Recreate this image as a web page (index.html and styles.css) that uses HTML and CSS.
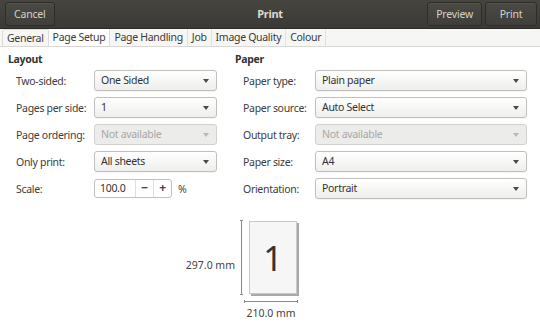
FILE: index.html
```html
<!DOCTYPE html>
<html lang="en">
  <head>
    <meta charset="UTF-8" />
    <meta name="viewport" content="width=device-width, initial-scale=1.0" />
    <title>Print</title>
    <link rel="stylesheet" href="styles.css">
  </head>
  <body>
    <div class="dialog">
      <!-- Header bar -->
      <header class="headerbar">
        <button class="hb-btn">Cancel</button>
        <div class="hb-title">Print</div>
        <div class="hb-actions">
          <button class="hb-btn">Preview</button>
          <button class="hb-btn">Print</button>
        </div>
      </header>

      <!-- Tabs -->
      <nav class="tabs">
        <span class="tab">General</span>
        <span class="tab active">Page Setup</span>
        <span class="tab">Page Handling</span>
        <span class="tab">Job</span>
        <span class="tab">Image Quality</span>
        <span class="tab">Colour</span>
      </nav>

      <div class="content">
        <section class="group group-layout">
          <h2 class="group-title">Layout</h2>
          <div class="rows">
            <div class="row">
              <span class="label">Two-sided:</span>
              <div class="combo">One Sided</div>
            </div>
            <div class="row">
              <span class="label">Pages per side:</span>
              <div class="combo">1</div>
            </div>
            <div class="row">
              <span class="label">Page ordering:</span>
              <div class="combo disabled">Not available</div>
            </div>
            <div class="row">
              <span class="label">Only print:</span>
              <div class="combo">All sheets</div>
            </div>
            <div class="row">
              <span class="label">Scale:</span>
              <div class="scale">
                <div class="spin">
                  <span class="spin-value">100.0</span>
                  <span class="spin-btn">−</span>
                  <span class="spin-btn">+</span>
                </div>
                <span class="unit">%</span>
              </div>
            </div>
          </div>
        </section>

        <section class="group group-paper">
          <h2 class="group-title">Paper</h2>
          <div class="rows">
            <div class="row">
              <span class="label">Paper type:</span>
              <div class="combo">Plain paper</div>
            </div>
            <div class="row">
              <span class="label">Paper source:</span>
              <div class="combo">Auto Select</div>
            </div>
            <div class="row">
              <span class="label">Output tray:</span>
              <div class="combo disabled">Not available</div>
            </div>
            <div class="row">
              <span class="label">Paper size:</span>
              <div class="combo">A4</div>
            </div>
            <div class="row">
              <span class="label">Orientation:</span>
              <div class="combo">Portrait</div>
            </div>
          </div>
        </section>
      </div>

      <!-- Page preview -->
      <div class="preview">
        <span class="dim-label dim-height">297.0 mm</span>
        <span class="vline"></span>
        <div class="page">1</div>
        <div class="width-dim">
          <span class="hline"></span>
          <span class="dim-label">210.0 mm</span>
        </div>
      </div>
    </div>
  </body>
</html>
```

FILE: styles.css
```css
/* Base Styles */
:root {
  --header-bg: #3d3c38;
  --text-color: #3c3c3c;
  --border-color: #c0bfbb;
}

* {
  box-sizing: border-box;
}

body {
  margin: 0;
  background: #ffffff;
  font-family: "Noto Sans", "DejaVu Sans", sans-serif;
  font-size: 10.5px;
  letter-spacing: -0.3px;
  color: var(--text-color);
}

.dialog {
  width: 540px;
  height: 327px;
  overflow: hidden;
}

/* Header bar */
.headerbar {
  height: 29px;
  display: flex;
  align-items: center;
  justify-content: space-between;
  padding: 0 3px 1px 5px;
  background: linear-gradient(#46453f, #3a3935);
  border-bottom: 1px solid #2c2b28;
  position: relative;
}

.hb-title {
  position: absolute;
  left: 0;
  right: 0;
  text-align: center;
  color: #dfdbd2;
  font-weight: bold;
  font-size: 11px;
  pointer-events: none;
}

.hb-actions {
  display: flex;
  gap: 3px;
}

.hb-btn {
  height: 24px;
  min-width: 48px;
  padding: 0 8px;
  font-family: inherit;
  font-size: 10.5px;
  letter-spacing: -0.2px;
  color: #d6d2c9;
  background: linear-gradient(#4a4944, #403f3b);
  border: 1px solid #2e2d2a;
  border-radius: 3px;
  box-shadow: inset 0 1px rgba(255, 255, 255, 0.06);
  position: relative;
  z-index: 1;
}

.hb-actions .hb-btn {
  min-width: 52px;
}

/* Tabs */
.tabs {
  height: 18px;
  display: flex;
  padding-left: 2px;
  background: #f6f6f5;
  border-bottom: 1px solid #d8d7d3;
}

.tab {
  display: flex;
  align-items: center;
  padding: 0 4px 1px;
  border-right: 1px solid #e2e1dd;
  color: #3a3a3a;
  white-space: nowrap;
}

.tab:first-child {
  border: 1px solid #dcdbd7;
  border-bottom: none;
  border-radius: 2px 2px 0 0;
}

.tab.active {
  background: #ffffff;
  border-right: 1px solid #dcdbd7;
}

/* Groups */
.content {
  display: grid;
  grid-template-columns: 209px 292px;
  column-gap: 18px;
  padding: 5px 13px 0 8px;
}

.group-title {
  margin: 0 0 3px;
  font-size: 10.5px;
  line-height: 15px;
  font-weight: bold;
  color: #333;
}

.rows {
  display: grid;
  row-gap: 6px;
  padding-left: 8px;
}

.row {
  display: grid;
  grid-template-columns: 78px 1fr;
  align-items: center;
  height: 21px;
}

.group-paper .row {
  grid-template-columns: 72px 1fr;
}

.label {
  white-space: nowrap;
}

/* Combo boxes */
.combo {
  position: relative;
  height: 21px;
  line-height: 19px;
  padding: 0 20px 0 6px;
  color: #333;
  background: linear-gradient(#ffffff, #eeeeec);
  border: 1px solid var(--border-color);
  border-radius: 3px;
  box-shadow: 0 1px rgba(0, 0, 0, 0.04);
}

.combo::after {
  content: "";
  position: absolute;
  right: 7px;
  top: 8px;
  border-left: 3.5px solid transparent;
  border-right: 3.5px solid transparent;
  border-top: 4px solid #4a4a4a;
}

.combo.disabled {
  color: #a8a8a6;
  background: #ececeb;
  border-color: #d2d1ce;
  box-shadow: none;
}

.combo.disabled::after {
  border-top-color: #b8b8b6;
}

/* Scale spinner */
.scale {
  display: flex;
  align-items: center;
  gap: 6px;
}

.spin {
  display: flex;
  height: 19px;
  width: 78px;
  background: #ffffff;
  border: 1px solid var(--border-color);
  border-radius: 3px;
}

.spin-value {
  flex: 1;
  padding-left: 5px;
  line-height: 17px;
  color: #333;
}

.spin-btn {
  width: 18px;
  text-align: center;
  line-height: 16px;
  font-size: 12px;
  font-weight: bold;
  color: #444;
  border-left: 1px solid #e0dfdb;
}

.unit {
  color: #444;
}

/* Page preview */
.preview {
  display: grid;
  grid-template-columns: 236px 3px 50px;
  grid-template-rows: 73px auto;
  column-gap: 4px;
  margin-top: 22px;
}

.dim-label {
  color: #444;
  font-size: 10.5px;
  letter-spacing: 0;
}

.dim-height {
  align-self: center;
  text-align: right;
  padding-top: 14px;
  padding-right: 1px;
}

.vline {
  height: 75px;
  border-top: 1px solid #8a8a8a;
  border-bottom: 1px solid #8a8a8a;
  background: linear-gradient(90deg, transparent 1px, #8a8a8a 1px, #8a8a8a 2px, transparent 2px);
  margin-top: -1px;
}

.page {
  margin-left: 2px;
  display: flex;
  align-items: center;
  justify-content: center;
  background: #f6f6f6;
  border: 1px solid #c8c8c8;
  box-shadow: 2px 2px 0 #a9a9a9;
  font-size: 34px;
  letter-spacing: 0;
  color: #333;
  line-height: 1;
}

.width-dim {
  grid-column: 3;
  display: flex;
  flex-direction: column;
  align-items: center;
  margin-left: -2px;
  padding-top: 6px;
}

.hline {
  width: 54px;
  height: 3px;
  border-left: 1px solid #8a8a8a;
  border-right: 1px solid #8a8a8a;
  background: linear-gradient(transparent 1px, #8a8a8a 1px, #8a8a8a 2px, transparent 2px);
  margin-bottom: 3px;
}

.width-dim .dim-label {
  white-space: nowrap;
}
```
